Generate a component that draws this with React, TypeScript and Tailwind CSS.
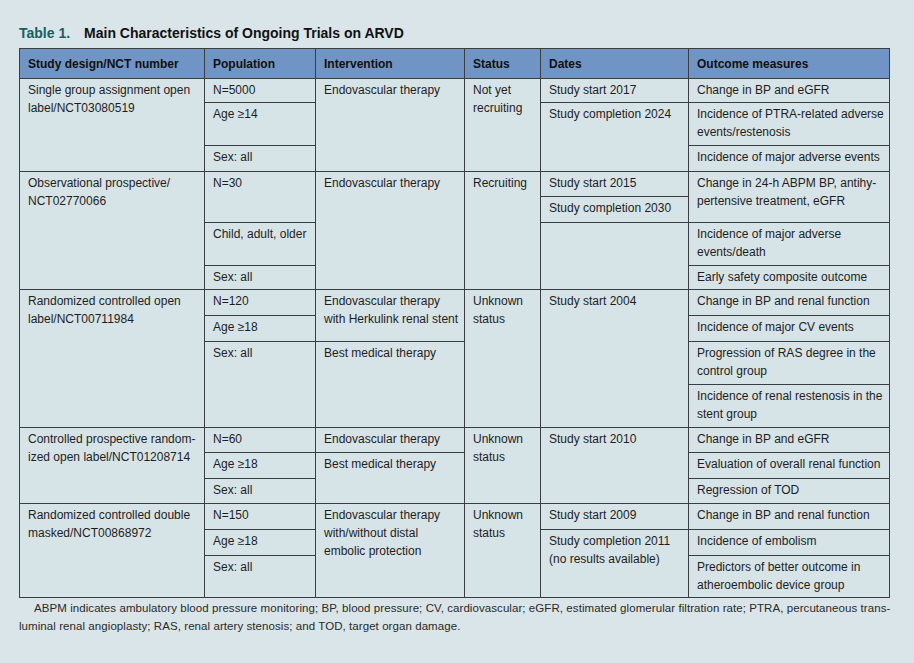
import React from 'react'

type CellProps = {
  rs?: number
  children?: React.ReactNode
}

const Td = ({ rs = 1, children }: CellProps) => (
  <td
    rowSpan={rs}
    className="border border-[#3a3e42] pl-[8px] pr-0 pt-[2px] align-top text-[12px] leading-[18px] text-[#1e1e1e]"
  >
    {children}
  </td>
)

const Th = ({ children }: CellProps) => (
  <th className="border border-[#3a3e42] bg-[#7094c4] px-[8px] text-left align-middle text-[12px] font-bold text-[#111]">
    {children}
  </th>
)

export default function App() {
  return (
    <div
      className="min-h-[663px] w-[914px] bg-[#d9e5e8] pl-[19px] pt-[23px]"
      style={{ fontFamily: '"Liberation Sans", Arial, sans-serif' }}
    >
      <h1 className="flex gap-[14px] text-[14px] font-bold leading-[20px] text-[#111]">
        <span className="text-[#17605f]">Table 1.</span>
        <span>Main Characteristics of Ongoing Trials on ARVD</span>
      </h1>

      <table className="mt-[5px] w-[870px] table-fixed border-collapse bg-[#d6e3e7]">
        <colgroup>
          <col className="w-[185px]" />
          <col className="w-[111px]" />
          <col className="w-[149px]" />
          <col className="w-[76px]" />
          <col className="w-[148px]" />
          <col className="w-[201px]" />
        </colgroup>
        <thead>
          <tr className="h-[30px]">
            <Th>Study design/NCT number</Th>
            <Th>Population</Th>
            <Th>Intervention</Th>
            <Th>Status</Th>
            <Th>Dates</Th>
            <Th>Outcome measures</Th>
          </tr>
        </thead>
        <tbody>
          {/* trial 1 */}
          <tr className="h-[24px]">
            <Td rs={3}>Single group assignment open label/NCT03080519</Td>
            <Td>N=5000</Td>
            <Td rs={3}>Endovascular therapy</Td>
            <Td rs={3}>Not yet recruiting</Td>
            <Td>Study start 2017</Td>
            <Td>Change in BP and eGFR</Td>
          </tr>
          <tr className="h-[43px]">
            <Td>Age ≥14</Td>
            <Td rs={2}>Study completion 2024</Td>
            <Td>Incidence of PTRA-related adverse<br />events/restenosis</Td>
          </tr>
          <tr className="h-[26px]">
            <Td>Sex: all</Td>
            <Td>Incidence of major adverse events</Td>
          </tr>

          {/* trial 2 */}
          <tr className="h-[25px]">
            <Td rs={4}>Observational prospective/<br />NCT02770066</Td>
            <Td rs={2}>N=30</Td>
            <Td rs={4}>Endovascular therapy</Td>
            <Td rs={4}>Recruiting</Td>
            <Td>Study start 2015</Td>
            <Td rs={2}>Change in 24-h ABPM BP, antihy-<br />pertensive treatment, eGFR</Td>
          </tr>
          <tr className="h-[26px]">
            <Td>Study completion 2030</Td>
          </tr>
          <tr className="h-[43px]">
            <Td>Child, adult, older</Td>
            <Td rs={2}></Td>
            <Td>Incidence of major adverse<br />events/death</Td>
          </tr>
          <tr className="h-[24px]">
            <Td>Sex: all</Td>
            <Td>Early safety composite outcome</Td>
          </tr>

          {/* trial 3 */}
          <tr className="h-[26px]">
            <Td rs={4}>Randomized controlled open<br />label/NCT00711984</Td>
            <Td>N=120</Td>
            <Td rs={2}>Endovascular therapy<br />with Herkulink renal stent</Td>
            <Td rs={4}>Unknown<br />status</Td>
            <Td rs={4}>Study start 2004</Td>
            <Td>Change in BP and renal function</Td>
          </tr>
          <tr className="h-[26px]">
            <Td>Age ≥18</Td>
            <Td>Incidence of major CV events</Td>
          </tr>
          <tr className="h-[43px]">
            <Td rs={2}>Sex: all</Td>
            <Td rs={2}>Best medical therapy</Td>
            <Td>Progression of RAS degree in the<br />control group</Td>
          </tr>
          <tr className="h-[43px]">
            <Td>Incidence of renal restenosis in the<br />stent group</Td>
          </tr>

          {/* trial 4 */}
          <tr className="h-[25px]">
            <Td rs={3}>Controlled prospective random-<br />ized open label/NCT01208714</Td>
            <Td>N=60</Td>
            <Td>Endovascular therapy</Td>
            <Td rs={3}>Unknown<br />status</Td>
            <Td rs={3}>Study start 2010</Td>
            <Td>Change in BP and eGFR</Td>
          </tr>
          <tr className="h-[26px]">
            <Td>Age ≥18</Td>
            <Td rs={2}>Best medical therapy</Td>
            <Td>Evaluation of overall renal function</Td>
          </tr>
          <tr className="h-[25px]">
            <Td>Sex: all</Td>
            <Td>Regression of TOD</Td>
          </tr>

          {/* trial 5 */}
          <tr className="h-[26px]">
            <Td rs={3}>Randomized controlled double<br />masked/NCT00868972</Td>
            <Td>N=150</Td>
            <Td rs={3}>Endovascular therapy<br />with/without distal<br />embolic protection</Td>
            <Td rs={3}>Unknown<br />status</Td>
            <Td>Study start 2009</Td>
            <Td>Change in BP and renal function</Td>
          </tr>
          <tr className="h-[26px]">
            <Td>Age ≥18</Td>
            <Td rs={2}>
              Study completion 2011
              <br />
              (no results available)
            </Td>
            <Td>Incidence of embolism</Td>
          </tr>
          <tr className="h-[42px]">
            <Td>Sex: all</Td>
            <Td>Predictors of better outcome in<br />atheroembolic device group</Td>
          </tr>
        </tbody>
      </table>

      <div className="mt-[1px] w-[870px] text-[11.5px] leading-[18px] text-[#2a2a2a]">
        <p className="whitespace-nowrap pl-[15px] tracking-[0.07px]">
          ABPM indicates ambulatory blood pressure monitoring; BP, blood pressure; CV, cardiovascular; eGFR, estimated glomerular filtration rate; PTRA, percutaneous trans-
        </p>
        <p className="whitespace-nowrap tracking-[0.07px]">
          luminal renal angioplasty; RAS, renal artery stenosis; and TOD, target organ damage.
        </p>
      </div>
    </div>
  )
}
